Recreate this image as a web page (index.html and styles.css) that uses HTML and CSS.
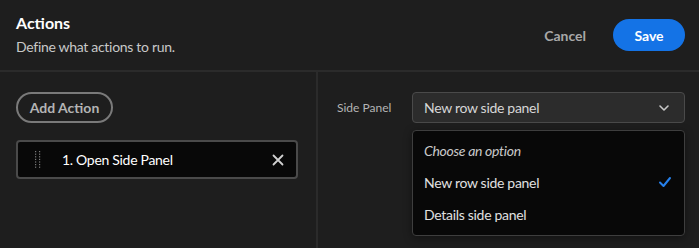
FILE: index.html
```html
<!DOCTYPE html>
<html lang="en">
<head>
  <meta charset="UTF-8">
  <title>Actions</title>
  <link rel="stylesheet" href="styles.css">
</head>
<body>
  <div class="dialog">
    <header class="head">
      <div class="head-text">
        <h1>Actions</h1>
        <p>Define what actions to run.</p>
      </div>
      <div class="head-buttons">
        <button class="btn-cancel">Cancel</button>
        <button class="btn-save">Save</button>
      </div>
    </header>

    <div class="content">
      <div class="left">
        <button class="btn-add">Add Action</button>
        <div class="action-item">
          <svg class="handle" width="6" height="17" viewBox="0 0 6 17">
            <g fill="#7a7a7a">
              <rect x="0" y="0" width="1.2" height="1.2"/><rect x="4" y="0" width="1.2" height="1.2"/>
              <rect x="0" y="2.6" width="1.2" height="1.2"/><rect x="4" y="2.6" width="1.2" height="1.2"/>
              <rect x="0" y="5.2" width="1.2" height="1.2"/><rect x="4" y="5.2" width="1.2" height="1.2"/>
              <rect x="0" y="7.8" width="1.2" height="1.2"/><rect x="4" y="7.8" width="1.2" height="1.2"/>
              <rect x="0" y="10.4" width="1.2" height="1.2"/><rect x="4" y="10.4" width="1.2" height="1.2"/>
              <rect x="0" y="13" width="1.2" height="1.2"/><rect x="4" y="13" width="1.2" height="1.2"/>
              <rect x="0" y="15.6" width="1.2" height="1.2"/><rect x="4" y="15.6" width="1.2" height="1.2"/>
            </g>
          </svg>
          <span class="action-name">1. Open Side Panel</span>
          <svg class="close" width="12" height="12" viewBox="0 0 12 12">
            <path d="M1.5 1.5 L10.5 10.5 M10.5 1.5 L1.5 10.5" stroke="#d0d0d0" stroke-width="1.8" stroke-linecap="round"/>
          </svg>
        </div>
      </div>

      <div class="right">
        <div class="field">
          <label>Side Panel</label>
          <div class="select-wrap">
            <div class="select">
              <span>New row side panel</span>
              <svg width="12" height="8" viewBox="0 0 12 8">
                <path d="M2 2 L6 6 L10 2" fill="none" stroke="#c8c8c8" stroke-width="1.6" stroke-linecap="round" stroke-linejoin="round"/>
              </svg>
            </div>
            <ul class="menu">
              <li class="placeholder">Choose an option</li>
              <li class="selected">New row side panel
                <svg width="14" height="12" viewBox="0 0 14 12">
                  <path d="M2 6.5 L5.5 10 L12 2" fill="none" stroke="#2680eb" stroke-width="2" stroke-linecap="round" stroke-linejoin="round"/>
                </svg>
              </li>
              <li>Details side panel</li>
            </ul>
          </div>
        </div>
      </div>
    </div>
  </div>
</body>
</html>
```

FILE: styles.css
```css
body {
  margin: 0;
  background: #1e1e1e;
  font-family: Lato, "Noto Sans", sans-serif;
  color: #e6e6e6;
}
.dialog {
  width: 699px;
  height: 248px;
  overflow: hidden;
}
.head {
  height: 72px;
  box-sizing: border-box;
  border-bottom: 2px solid #2b2b2b;
  display: flex;
  justify-content: space-between;
  align-items: center;
  padding: 0 14px 0 16px;
}
.head h1 {
  margin: 0;
  font-size: 16px;
  font-weight: bold;
  color: #ffffff;
  line-height: 20px;
}
.head p {
  margin: 4px 0 0;
  font-size: 14px;
  letter-spacing: -0.3px;
  color: #c8c8c8;
  line-height: 20px;
}
.head-buttons {
  display: flex;
  align-items: center;
  gap: 27px;
}
button {
  font-family: inherit;
  cursor: pointer;
}
.btn-cancel {
  background: none;
  border: none;
  color: #a8a8a8;
  font-size: 14px;
  font-weight: bold;
  padding: 0;
}
.btn-save {
  width: 72px;
  height: 32px;
  border: none;
  border-radius: 16px;
  background: #1473e6;
  color: #ffffff;
  font-size: 14px;
  font-weight: bold;
}
.content {
  display: grid;
  grid-template-columns: 316px 2px 1fr;
  height: 176px;
}
.content::before {
  content: "";
  grid-column: 2;
  grid-row: 1;
  background: #2b2b2b;
}
.left {
  grid-column: 1;
  grid-row: 1;
  padding: 20px 18px 0 16px;
}
.btn-add {
  height: 31px;
  width: 97px;
  box-sizing: border-box;
  border: 2px solid #7a7a7a;
  border-radius: 16px;
  background: transparent;
  color: #b4b4b4;
  font-size: 14px;
  font-weight: bold;
  padding: 0;
}
.action-item {
  margin-top: 17px;
  height: 39px;
  box-sizing: border-box;
  border: 2px solid #4a4a4a;
  border-radius: 4px;
  background: #080808;
  display: flex;
  align-items: center;
  padding: 0 12px 0 17px;
}
.action-name {
  flex: 1;
  margin-left: 21px;
  font-size: 14px;
  letter-spacing: -0.3px;
  color: #ffffff;
}
.right {
  grid-column: 3;
  grid-row: 1;
  padding: 20px 14px 0 19px;
}
.field {
  display: flex;
  align-items: flex-start;
}
.field label {
  width: 75px;
  font-size: 12px;
  color: #b4b4b4;
  line-height: 31px;
}
.select-wrap {
  flex: 1;
  position: relative;
}
.select {
  height: 31px;
  box-sizing: border-box;
  border: 1px solid #4a4a4a;
  border-radius: 4px;
  background: #2c2c2c;
  display: flex;
  align-items: center;
  justify-content: space-between;
  padding: 0 14px 0 11px;
  font-size: 14px;
  letter-spacing: -0.3px;
  color: #d6d6d6;
}
.menu {
  position: absolute;
  top: 38px;
  left: 0;
  right: 0;
  margin: 0;
  padding: 3px 0 5px;
  list-style: none;
  background: #080808;
  border: 1px solid #3e3e3e;
  border-radius: 4px;
  box-shadow: 0 2px 8px rgba(0, 0, 0, 0.4);
}
.menu li {
  height: 32px;
  display: flex;
  align-items: center;
  justify-content: space-between;
  padding: 0 12px 0 11px;
  font-size: 14px;
  letter-spacing: -0.3px;
  color: #e0e0e0;
}
.menu li.placeholder {
  font-style: italic;
  color: #c8c8c8;
}
```
